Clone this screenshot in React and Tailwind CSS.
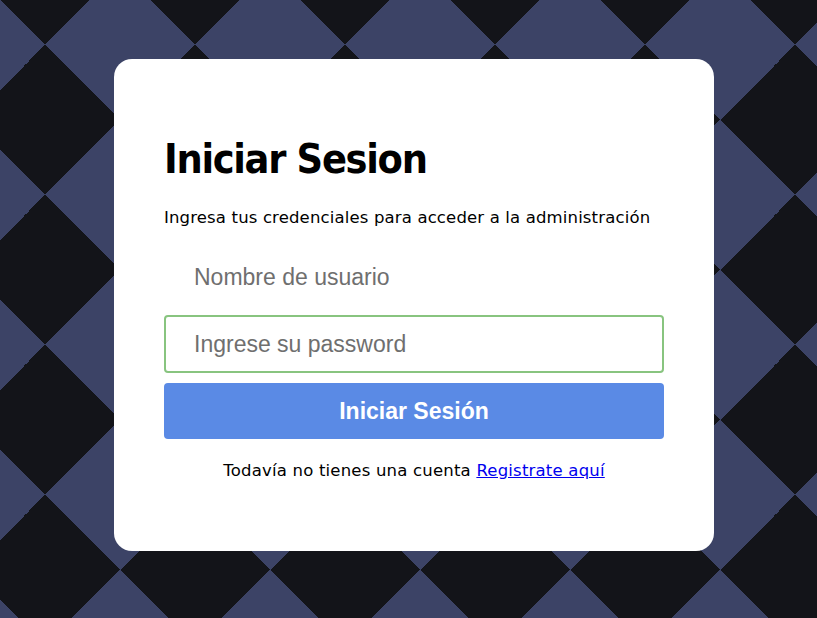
import React from 'react';

const titleFont = "font-['DejaVu_Sans_Condensed','DejaVu_Sans',sans-serif] [font-stretch:condensed]";
const bodyFont = "font-['DejaVu_Sans','Liberation_Sans',sans-serif]";
const fieldFont = "font-['Liberation_Sans',Arial,sans-serif]";

const Field = ({ type = 'text', placeholder, className = '' }) => (
  <input
    type={type}
    placeholder={placeholder}
    className={`block w-full h-[58px] rounded-[4px] border-2 bg-white pl-[28px] pr-3 text-[23px] text-[#333] outline-none placeholder:text-[#6f6f6f] ${fieldFont} ${className}`}
  />
);

const App = () => {
  return (
    <div className="w-full h-screen overflow-hidden bg-[#3c4366] bg-[image:conic-gradient(from_-45deg,#131419_0_25%,#3c4366_0_50%,#131419_0_75%,#3c4366_0)] bg-[length:150px_150px] bg-[position:-30px_-30px]">
      <div className={`ml-[114px] mt-[59px] w-[600px] rounded-[18px] bg-white px-[50px] pt-[76px] pb-[70px] text-black ${bodyFont}`}>
        <h1 className={`text-[41px] leading-[48px] font-bold tracking-[-1.3px] ${titleFont}`}>Iniciar Sesion</h1>
        <p className="mt-[25px] text-[16.5px] leading-[20px] tracking-[0.15px]">
          Ingresa tus credenciales para acceder a la administración
        </p>

        <form className="mt-[20px]" onSubmit={(e) => e.preventDefault()}>
          <Field placeholder="Nombre de usuario" className="border-transparent" />
          <Field type="password" placeholder="Ingrese su password" className="mt-[9px] border-[#88c47f]" />
          <button
            type="submit"
            className={`mt-[10px] block w-full h-[56px] rounded-[4px] bg-[#5a8ae5] text-[23px] font-bold text-white ${fieldFont}`}
          >
            Iniciar Sesión
          </button>
        </form>

        <p className="mt-[22px] text-center text-[16.5px] leading-[20px] tracking-[0.2px]">
          Todavía no tienes una cuenta{' '}
          <a href="#" className="text-[#0000ee] underline">Registrate aquí</a>
        </p>
      </div>
    </div>
  );
};

export default App;
